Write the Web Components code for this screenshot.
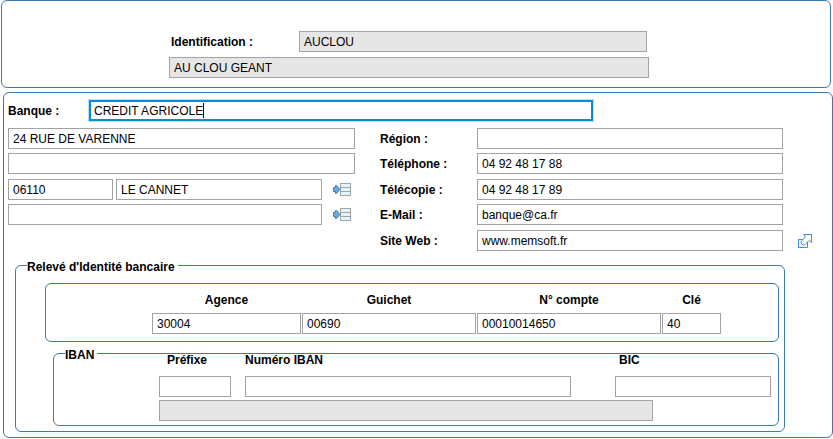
<!DOCTYPE html>
<html lang="fr">
<head>
<meta charset="utf-8">
<title>Banque</title>
<style>
  body {
    margin: 0;
    background: #fff;
    color: #000;
    font: 12px/14px "Liberation Sans", Arial, sans-serif;
  }
</style>
</head>
<body>
<bank-form></bank-form>

<script>
class FormPanel extends HTMLElement {
  constructor() {
    super();
    this.attachShadow({ mode: 'open' });
  }

  connectedCallback() {
    const legend = this.getAttribute('legend');
    this.shadowRoot.innerHTML = `
      <style>
        :host {
          display: block;
        }
        fieldset {
          min-width: 0;
          margin: 0;
          padding: 0;
          border: 1px solid #3a7ab5;
          border-radius: 6px;
        }
        legend {
          margin-left: 11px;
          padding: 3px 3px 0 0;
          font-weight: bold;
        }
        .body {
          padding: var(--panel-padding, 0);
        }
        legend + .body {
          margin-top: -9px;
        }
      </style>
      <fieldset>
        ${legend ? `<legend>${legend}</legend>` : ''}
        <div class="body"><slot></slot></div>
      </fieldset>
    `;
  }
}

class TextField extends HTMLElement {
  constructor() {
    super();
    this.attachShadow({ mode: 'open' });
  }

  connectedCallback() {
    const label = this.getAttribute('label');
    const name = this.getAttribute('name') || '';
    const value = this.getAttribute('value') || '';
    const type = this.getAttribute('type') || 'text';
    const readonly = this.hasAttribute('readonly') ? 'readonly' : '';

    this.shadowRoot.innerHTML = `
      <style>
        :host {
          display: flex;
          align-items: center;
          min-width: 0;
        }
        :host([stacked]) {
          flex-direction: column;
          align-items: stretch;
          gap: var(--label-gap, 6px);
        }
        label {
          flex: none;
          box-sizing: border-box;
          width: var(--label-width, auto);
          padding-left: var(--label-indent, 0);
          font-weight: bold;
          text-align: var(--label-align, left);
          white-space: nowrap;
        }
        input {
          flex: 1 1 auto;
          box-sizing: border-box;
          width: 100%;
          min-width: 0;
          height: 21px;
          margin: 0;
          padding: 0 4px;
          border: 1px solid #a3a3a3;
          border-radius: 0;
          outline: none;
          background: #fff;
          color: inherit;
          font: inherit;
        }
        :host([stacked]) input {
          flex: none;
        }
        input:read-only {
          background: #e6e6e6;
        }
        /* champ en cours de saisie, avec son curseur */
        :host([active]) input {
          padding: 0 3px;
          border: 2px solid #0a8dd3;
          box-shadow: 0 0 0 1px #b5dff5;
          background: linear-gradient(#000, #000) no-repeat 112px center / 1px 15px #fff;
        }
      </style>
      ${label ? `<label for="input">${label}</label>` : ''}
      <input id="input" type="${type}" name="${name}" value="${value}"
        ${label ? '' : `aria-label="${name}"`} ${readonly} autocomplete="off" spellcheck="false">
    `;
  }
}

class ListButton extends HTMLElement {
  constructor() {
    super();
    this.attachShadow({ mode: 'open' });
    this.shadowRoot.innerHTML = `
      <style>
        :host {
          display: block;
        }
        button {
          display: block;
          padding: 0;
          border: none;
          background: none;
          cursor: pointer;
        }
        svg {
          display: block;
        }
      </style>
      <button type="button" aria-label="Liste">
        <svg width="18" height="13" viewBox="0 0 18 13">
          <rect x="7.5" y=".5" width="10" height="12" fill="#e0f5fb" stroke="#a2a4a6"/>
          <path d="M8 4.5h9M8 8.5h9" stroke="#a2a4a6"/>
          <path d="M.5 4.5h2v-2h1l3.5 4-3.5 4h-1v-2h-2z" fill="#62b0e6" stroke="#4779a5"/>
        </svg>
      </button>
    `;
  }
}

class SiteLink extends HTMLElement {
  constructor() {
    super();
    this.attachShadow({ mode: 'open' });
  }

  connectedCallback() {
    this.shadowRoot.innerHTML = `
      <style>
        :host {
          display: block;
        }
        a, svg {
          display: block;
        }
      </style>
      <a href="${this.getAttribute('href')}" aria-label="Ouvrir le site">
        <svg width="14" height="14" viewBox="0 0 14 14" fill="#fff" stroke="#3f8cec">
          <path d="M.5 5.5h9v8h-9z"/>
          <path d="M5.5 .5h8v8l-2.500-2-4.500 4.500h-1.500l-2-2v-1.500l4.500-4.500z"/>
        </svg>
      </a>
    `;
  }
}

class BankForm extends HTMLElement {
  constructor() {
    super();
    this.attachShadow({ mode: 'open' });
    this.shadowRoot.innerHTML = `
      <style>
        :host {
          display: block;
        }
        form {
          display: flex;
          flex-direction: column;
          gap: 4px;
        }
        .header {
          --panel-padding: 30px 181px 9px 167px;
          margin: 0 2px 0 1px;
        }
        .header-fields {
          display: grid;
          gap: 5px;
        }
        .code {
          --label-width: 130px;
          --label-indent: 2px;
          padding-right: 2px;
        }
        .details {
          --panel-padding: 7px 0 5px 4px;
          margin-left: 3px;
        }
        .bank {
          --label-width: 81px;
          margin: 0 239px 7px 0;
        }
        .contact {
          display: grid;
          grid-template-columns: 357fr 403fr 14px;
          grid-template-rows: 25px 26px 25px 26px 21px;
          column-gap: 15px;
          margin-right: 20px;
        }
        .contact > * {
          align-self: start;
        }
        .contact > .left {
          grid-column: 1;
          margin-right: 10px;
        }
        .contact > .right {
          --label-width: 97px;
          grid-column: 2;
        }
        .town {
          display: grid;
          align-items: center;
          grid-template-columns: 105fr 206fr 26px;
          column-gap: 3px;
          padding-right: 4px;
        }
        .town list-button {
          grid-column: 3;
          justify-self: end;
        }
        .town .wide {
          grid-column: 1 / 3;
        }
        .contact site-link {
          grid-column: 3;
          align-self: center;
        }
        .rib {
          --panel-padding: 18px 5px 5px 29px;
          margin: 6px 47px 0 7px;
        }
        .account {
          --panel-padding: 9px 57px 7px 106px;
        }
        .account-fields {
          --label-align: center;
          display: grid;
          grid-template-columns: 149fr 174fr 184fr 59fr;
          column-gap: 1px;
        }
        .iban {
          --panel-padding: 0 7px 4px 105px;
          --label-gap: 9px;
          margin: 3px 0 0 8px;
        }
        .iban-fields {
          display: grid;
          grid-template-columns: 72fr 14px 326fr 44px 156fr;
          row-gap: 3px;
        }
        .prefix {
          --label-indent: 8px;
        }
        .number {
          grid-column: 3;
        }
        .bic {
          --label-indent: 4px;
          grid-column: 5;
        }
        .domiciliation {
          grid-column: 1 / -1;
          margin-right: 118px;
        }
      </style>
      <form>
        <form-panel class="header">
          <div class="header-fields">
            <text-field class="code" label="Identification :" name="code" value="AUCLOU" readonly></text-field>
            <text-field name="nom" value="AU CLOU GEANT" readonly></text-field>
          </div>
        </form-panel>

        <form-panel class="details">
          <text-field class="bank" label="Banque :" name="banque" value="CREDIT AGRICOLE" active></text-field>

          <div class="contact">
            <text-field class="left" name="adresse" value="24 RUE DE VARENNE"></text-field>
            <text-field class="right" label="Région :" name="region"></text-field>

            <text-field class="left" name="complement"></text-field>
            <text-field class="right" label="Téléphone :" name="telephone" value="04 92 48 17 88"></text-field>

            <div class="left town">
              <text-field name="code postal" value="06110"></text-field>
              <text-field name="ville" value="LE CANNET"></text-field>
              <list-button></list-button>
            </div>
            <text-field class="right" label="Télécopie :" name="telecopie" value="04 92 48 17 89"></text-field>

            <div class="left town">
              <text-field class="wide" name="pays"></text-field>
              <list-button></list-button>
            </div>
            <text-field class="right" label="E-Mail :" name="email" value="banque@ca.fr"></text-field>

            <text-field class="right" label="Site Web :" name="site" value="www.memsoft.fr"></text-field>
            <site-link href="#site"></site-link>
          </div>

          <form-panel class="rib" legend="Relevé d'Identité bancaire">
            <form-panel class="account">
              <div class="account-fields">
                <text-field stacked label="Agence" name="agence" value="30004"></text-field>
                <text-field stacked label="Guichet" name="guichet" value="00690"></text-field>
                <text-field stacked label="N° compte" name="compte" value="00010014650"></text-field>
                <text-field stacked label="Clé" name="cle" value="40"></text-field>
              </div>
            </form-panel>

            <form-panel class="iban" legend="IBAN">
              <div class="iban-fields">
                <text-field class="prefix" stacked label="Préfixe" name="prefixe"></text-field>
                <text-field class="number" stacked label="Numéro IBAN" name="iban"></text-field>
                <text-field class="bic" stacked label="BIC" name="bic"></text-field>
                <text-field class="domiciliation" name="domiciliation" readonly></text-field>
              </div>
            </form-panel>
          </form-panel>
        </form-panel>
      </form>
    `;
  }
}

customElements.define('form-panel', FormPanel);
customElements.define('text-field', TextField);
customElements.define('list-button', ListButton);
customElements.define('site-link', SiteLink);
customElements.define('bank-form', BankForm);
</script>
</body>
</html>
